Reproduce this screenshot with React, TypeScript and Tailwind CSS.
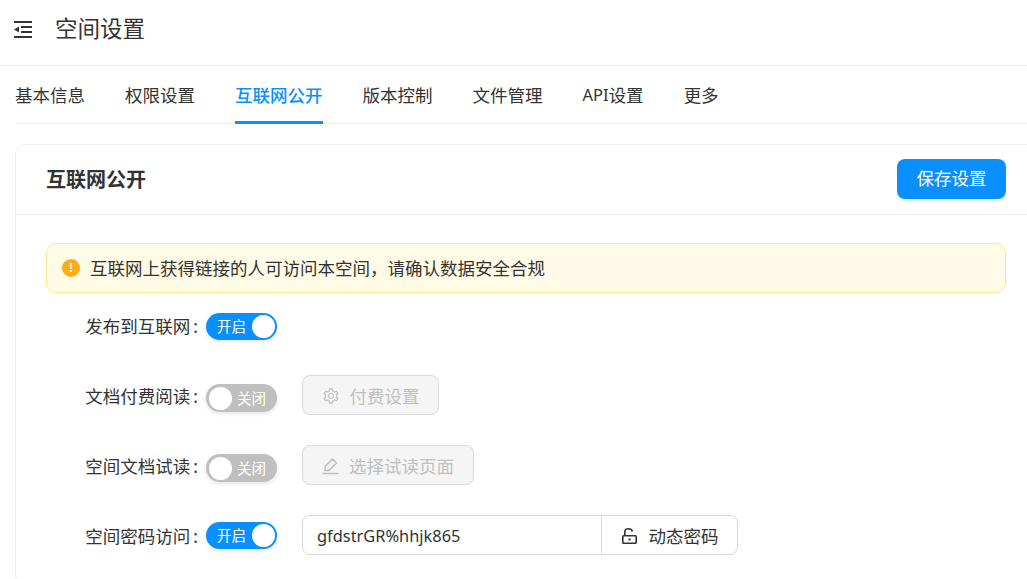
import type { ReactNode } from 'react';
import { AiOutlineSetting } from 'react-icons/ai';

const tabs = ['基本信息', '权限设置', '互联网公开', '版本控制', '文件管理', 'API设置', '更多'];

function Toggle({ on, first }: { on: boolean; first?: boolean }) {
  if (on) {
    return (
      <div className={first ? 'mt-[3px] flex h-[27px] w-[71px] shrink-0 items-center justify-between rounded-full bg-[#0a8fff] pb-[1px] pl-[11px] pr-[2px] shadow-[0_2px_4px_rgba(0,0,0,0.1)]' : 'flex h-[27px] w-[71px] shrink-0 items-center justify-between rounded-full bg-[#0a8fff] pl-[11px] pr-[2px] shadow-[0_2px_4px_rgba(0,0,0,0.1)]'}>
        <span className="text-[14.5px] leading-none text-white">开启</span>
        <span className="h-[23px] w-[23px] rounded-full bg-white" />
      </div>
    );
  }
  return (
    <div className="mt-[6px] flex h-[28px] w-[71px] shrink-0 items-center justify-between rounded-full bg-[#bfbfbf] pl-[3px] pr-[11px] shadow-[0_2px_4px_rgba(0,0,0,0.1)]">
      <span className="h-[23px] w-[23px] rounded-full bg-white" />
      <span className="text-[14.5px] leading-none text-white">关闭</span>
    </div>
  );
}

function Row({ label, children }: { label: string; children: ReactNode }) {
  return (
    <div className="mb-[30px] flex h-[40px] items-center">
      <div className="w-[160px] pr-[8px] pt-[2px] text-right text-[17.5px] text-[#333]">
        {label}
        <span className="pl-[3px]">:</span>
      </div>
      {children}
    </div>
  );
}

export default function App() {
  return (
    <div className="h-[579px] w-[1027px] overflow-hidden bg-white font-['Noto_Sans','Noto_Sans_CJK_SC',sans-serif] text-[#333]">
      <header className="flex h-[66px] items-center border-b border-[#f0f0f0] pb-[8px] pl-[14px]">
        <svg width="18" height="17" viewBox="0 0 18 17" fill="none" className="mr-[23px] mt-[2px] text-[#333]">
          <path d="M0 1H18M7 6H18M7 11H18M0 16H18" stroke="currentColor" strokeWidth="1.8" />
          <path d="M0 8.5L5 5.5V11.5Z" fill="currentColor" />
        </svg>
        <h1 className="text-[22.5px] font-normal text-[#333]">空间设置</h1>
      </header>

      <div className="ml-[15px] w-[1012px]">
        <nav className="flex h-[58px] gap-[40px] border-b border-[#f0f0f0]">
          {tabs.map((t) => (
            <div
              key={t}
              className={
                t === '互联网公开'
                  ? 'flex h-[58px] items-center border-b-[3px] border-[#0a8fff] pt-[3px] text-[17.5px] font-medium text-[#0a8fff]'
                  : 'flex h-[58px] items-center text-[17.5px] text-[#333]'
              }
            >
              {t === 'API设置' ? (
                <>
                  <span className="text-[16.5px]">API</span>设置
                </>
              ) : (
                t
              )}
            </div>
          ))}
        </nav>

        <section className="mt-[20px] w-[1040px] rounded-[10px] border border-[#f0f0f0]">
          <div className="flex h-[70px] items-center justify-between border-b border-[#f0f0f0] pb-[2px] pl-[30px] pr-[48px]">
            <h2 className="pt-[3px] text-[20px] font-bold text-[#333]">互联网公开</h2>
            <button className="h-[40px] w-[109px] rounded-[8px] bg-[#0a8fff] text-[17.5px] text-white shadow-[0_2px_0_rgba(5,145,255,0.1)]">保存设置</button>
          </div>

          <div className="pl-[30px] pr-[48px] pt-[28px]">
            <div className="mb-[12px] flex h-[50px] items-center rounded-[10px] border border-[#ffe58f] bg-[#fffbe6] pl-[15px] text-[17.5px] text-[#333]">
              <span className="mr-[10px] flex h-[18px] w-[18px] items-center justify-center rounded-full bg-[#faad14] text-[12px] font-bold leading-none text-white">!</span>
              <span className="font-['Noto_Sans_CJK_SC',sans-serif]">互联网上获得链接的人可访问本空间{'\uFF0C'}请确认数据安全合规</span>
            </div>

            <Row label="发布到互联网">
              <Toggle on first />
            </Row>
            <Row label="文档付费阅读">
              <Toggle on={false} />
              <button className="ml-[25px] flex h-[40px] w-[137px] items-center justify-center gap-[10px] rounded-[8px] border border-[#d9d9d9] bg-[#f5f5f5] pt-[2px] text-[17.5px] text-[#bfbfbf]">
                <AiOutlineSetting size={18} />
                付费设置
              </button>
            </Row>
            <Row label="空间文档试读">
              <Toggle on={false} />
              <button className="ml-[25px] flex h-[40px] w-[172px] items-center justify-center gap-[10px] rounded-[8px] border border-[#d9d9d9] bg-[#f5f5f5] pt-[2px] text-[17.5px] text-[#bfbfbf]">
                <svg width="17" height="18" viewBox="0 0 17 18" fill="none" stroke="currentColor" strokeWidth="1.5">
                  <path d="M0.5 16.5H16.5" />
                  <path d="M3 13.5V9.5L10.5 2L14.5 6L7 13.5Z" strokeLinejoin="round" />
                </svg>
                选择试读页面
              </button>
            </Row>
            <Row label="空间密码访问">
              <Toggle on />
              <div className="ml-[25px] flex h-[40px] w-[436px] items-center rounded-[8px] border border-[#d9d9d9] text-[17.5px]">
                <div className="flex-1 pl-[14px] pt-[2px] text-[16.4px] text-[#333]">gfdstrGR%hhjk865</div>
                <div className="flex h-full w-[136px] items-center justify-center gap-[12px] border-l border-[#d9d9d9] pl-[1px] pt-[2px]">
                  <svg width="15" height="16" viewBox="0 0 15 16" fill="none" stroke="currentColor" strokeWidth="1.6">
                    <rect x="0.8" y="7.8" width="13.4" height="7.4" rx="0.8" />
                    <path d="M2.8 7.8V4C2.8 2 4.5 0.8 6.5 0.8C8.5 0.8 10 1.8 10.5 3.5" />
                    <path d="M7.5 10.5V12.5" strokeWidth="2" />
                  </svg>
                  动态密码
                </div>
              </div>
            </Row>
          </div>
        </section>
      </div>
    </div>
  );
}
